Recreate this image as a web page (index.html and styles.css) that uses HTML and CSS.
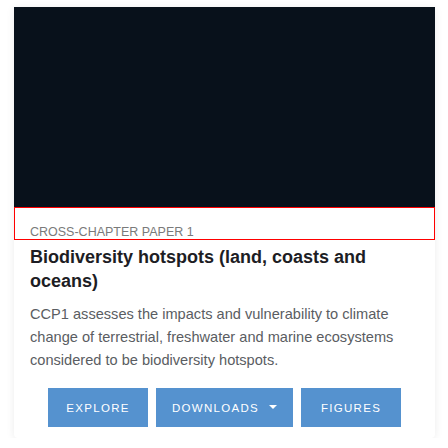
FILE: index.html
```html
<!DOCTYPE html>
<html>
<head>
<meta charset="utf-8">
<link rel="stylesheet" href="styles.css">
</head>
<body>
<div class="page">
  <div class="card">
    <div class="media"></div>
    <div class="eyebrow"><span>CROSS-CHAPTER PAPER 1</span></div>
    <div class="body">
      <h2 class="title">Biodiversity hotspots (land, coasts and oceans)</h2>
      <p class="desc">CCP1 assesses the impacts and vulnerability to climate change of terrestrial, freshwater and marine ecosystems considered to be biodiversity hotspots.</p>
    </div>
    <div class="actions">
      <a class="btn btn-explore">EXPLORE</a>
      <a class="btn btn-downloads">DOWNLOADS <span class="caret"></span></a>
      <a class="btn btn-figures">FIGURES</a>
    </div>
  </div>
</div>
</body>
</html>
```
FILE: styles.css
```css
html, body {
  margin: 0;
  padding: 0;
  background: #ffffff;
}
.page {
  padding: 7px 13px 0 14px;
}
.card {
  width: 421px;
  background: #fff;
  border-radius: 0 0 4px 4px;
  box-shadow: 0 1px 8px rgba(0,0,0,0.08);
  padding-bottom: 11px;
  font-family: "Liberation Sans", Arial, sans-serif;
}
.media {
  height: 200px;
  background: #08111b;
}
.eyebrow {
  height: 33px;
  box-sizing: border-box;
  border: 1px solid #ff0000;
  padding: 18px 0 0 15px;
  font-size: 12.5px;
  line-height: 12px;
  color: #7a7a7a;
}
.body {
  padding: 5px 16px 0 16px;
}
.title {
  margin: 0;
  font-size: 18px;
  line-height: 24px;
  font-weight: bold;
  color: #1d1d24;
}
.desc {
  margin: 10px 0 0 0;
  font-size: 14.6px;
  line-height: 23px;
  color: #5a5d62;
}
.actions {
  display: flex;
  justify-content: center;
  gap: 8px;
  margin-top: 16px;
}
.btn {
  display: flex;
  align-items: center;
  justify-content: center;
  height: 39px;
  background: #5592cf;
  color: #fff;
  font-size: 11.5px;
  letter-spacing: 1.3px;
  font-weight: 500;
}
.btn-explore { width: 100px; }
.btn-downloads { width: 137px; }
.btn-figures { width: 100px; }
.caret {
  display: inline-block;
  width: 0;
  height: 0;
  border-left: 4px solid transparent;
  border-right: 4px solid transparent;
  border-top: 4px solid #fff;
  margin-left: 10px;
  margin-bottom: 2px;
}
```
